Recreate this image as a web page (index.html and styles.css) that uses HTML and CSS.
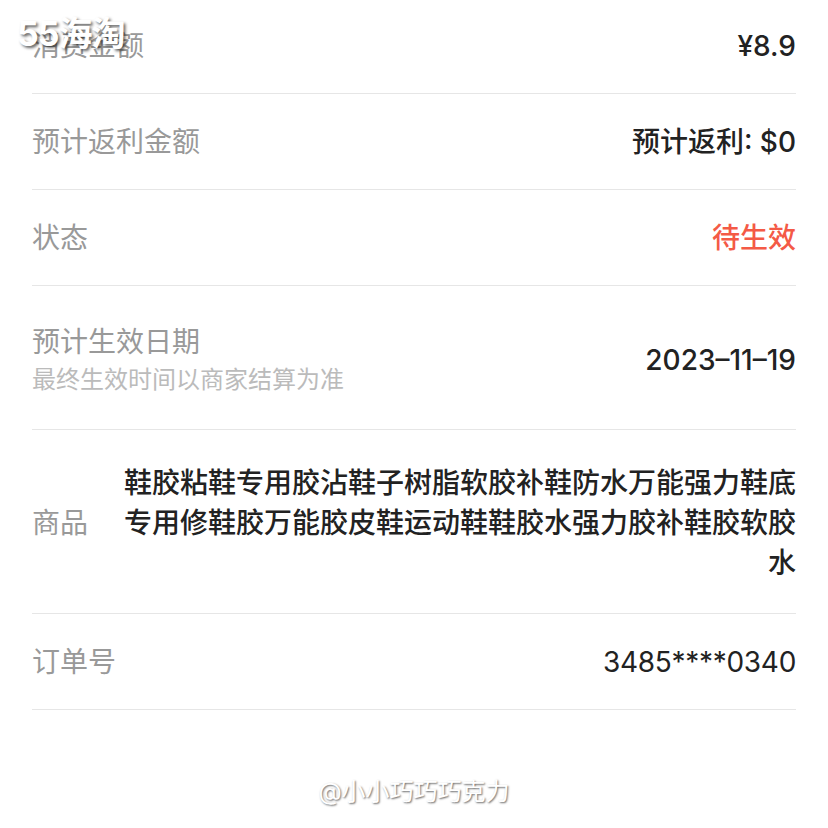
FILE: index.html
```html
<!DOCTYPE html>
<html lang="zh-CN">

<head>
    <meta charset="UTF-8">
    <meta name="viewport" content="width=device-width, initial-scale=1.0">
    <title>订单详情</title>
    <link rel="stylesheet" href="styles.css">
</head>

<body>
    <div id="detail">
        <div class="row first">
            <div class="label">消费金额</div>
            <div class="value">¥8.9</div>
        </div>
        <div class="row">
            <div class="label">预计返利金额</div>
            <div class="value">预计返利: $0</div>
        </div>
        <div class="row">
            <div class="label">状态</div>
            <div class="value pending">待生效</div>
        </div>
        <div class="row tall">
            <div>
                <div class="label">预计生效日期</div>
                <div class="sub">最终生效时间以商家结算为准</div>
            </div>
            <div class="value">2023–11–19</div>
        </div>
        <div class="row goods">
            <div class="label">商品</div>
            <div class="value">鞋胶粘鞋专用胶沾鞋子树脂软胶补鞋防水万能强力鞋底专用修鞋胶万能胶皮鞋运动鞋鞋胶水强力胶补鞋胶软胶水</div>
        </div>
        <div class="row">
            <div class="label">订单号</div>
            <div class="value order">3485****0340</div>
        </div>
    </div>

    <div class="mark-logo">55海淘</div>
    <div class="mark-user">@小小巧巧巧克力</div>
</body>

</html>
```

FILE: styles.css
```css
body {
    font-family: Inter, "Noto Sans CJK SC", sans-serif;
    margin: 0;
    padding: 0;
    background-color: #fff;
    width: 828px;
    height: 828px;
    overflow: hidden;
    position: relative;
}

#detail {
    padding: 0 32px;
}

.row {
    display: flex;
    justify-content: space-between;
    align-items: center;
    padding: 28px 0 27px;
    border-bottom: 1px solid #e6e6e6;
    font-size: 28px;
    line-height: 40px;
}

.row.first {
    padding-top: 26px;
}

.row.tall {
    padding: 36px 0 31px;
}

.row.goods {
    padding: 33px 0 30px;
}

.label {
    color: #999;
    white-space: nowrap;
}

.sub {
    color: #bbb;
    font-size: 24px;
    line-height: 36px;
}

.value {
    color: #222;
    font-weight: 500;
    text-align: right;
}

.goods .value {
    flex: 1;
    margin-left: 20px;
}

.order {
    font-weight: 400;
    letter-spacing: -0.3px;
}

.pending {
    color: #f45a46;
}

.mark-logo {
    position: absolute;
    left: 17px;
    top: 12px;
    font-size: 34px;
    font-weight: 700;
    line-height: 44px;
    color: #fff;
    letter-spacing: -1px;
    text-shadow: 2px 2px 3px rgba(0, 0, 0, 0.6);
}

.mark-user {
    position: absolute;
    left: 0;
    right: 0;
    top: 774px;
    text-align: center;
    font-size: 24px;
    line-height: 36px;
    color: #fff;
    text-shadow: 1px 1px 2px rgba(0, 0, 0, 0.6);
}
```
